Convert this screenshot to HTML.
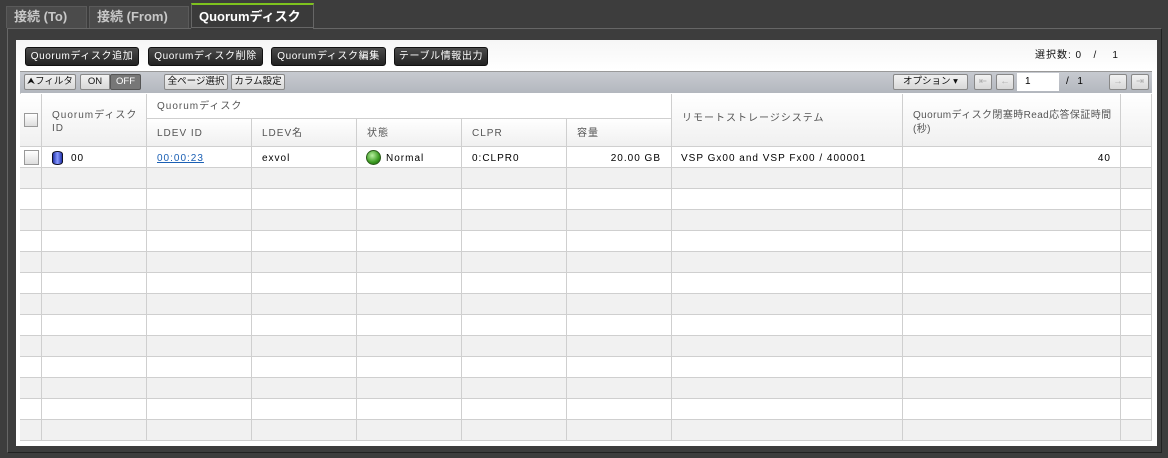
<!DOCTYPE html>
<html><head><meta charset="utf-8"><style>
*{box-sizing:border-box;margin:0;padding:0}
body{width:1168px;height:458px;background:#3d3d3d;font-family:"Liberation Sans","Noto Sans CJK JP",sans-serif;position:relative;overflow:hidden;line-height:12px}
.a{position:absolute}
.s{letter-spacing:1px}
.tab{position:absolute;top:6px;height:22px;background:#4b4b4b;border:1px solid #5a5a5a;border-bottom:none;color:#c8c8c8;font-weight:bold;font-size:13px;line-height:20px;padding-left:7px}
.btn{position:absolute;top:47px;height:19px;background:linear-gradient(#4a4a4a,#222);border:1px solid #111;border-radius:3px;color:#fff;font-size:10px;line-height:17px;text-align:center;letter-spacing:0.6px;white-space:nowrap}
.tb{position:absolute;top:74px;height:16px;background:linear-gradient(#f2f2f2,#d8d8d8);border:1px solid #888;border-radius:2px;font-size:9.5px;line-height:14px;text-align:center;color:#111;white-space:nowrap}
.cell{position:absolute;border-right:1px solid #cfcfcf;border-bottom:1px solid #cfcfcf;font-size:10px;color:#111;line-height:12px;letter-spacing:1px;white-space:nowrap}
.h{color:#555;background:linear-gradient(#fff,#f0f0f0)}
</style></head><body>
<div class="tab" style="left:6px;width:81px">接続 (To)</div>
<div class="tab" style="left:89px;width:100px">接続 (From)</div>
<div class="tab" style="left:191px;top:3px;height:25px;width:123px;background:#3a3a3a;border:1px solid #666;border-top:2px solid #7ec21e;color:#fff;line-height:23px">Quorumディスク</div>
<div class="a" style="left:7px;top:28px;width:1155px;height:425px;border:1px solid #666;border-right-color:#222;border-bottom-color:#222;background:#3d3d3d"></div>
<div class="a" style="left:191px;top:28px;width:122px;height:2px;background:#3a3a3a"></div>
<div class="a" style="left:16px;top:40px;width:1141px;height:406px;background:#fff;border-radius:3px 3px 0 0"></div>
<div class="a" style="left:16px;top:40px;width:1141px;height:30px;background:linear-gradient(#f6f6f6,#fff)"></div>
<div class="btn" style="left:25px;width:114px">Quorumディスク追加</div>
<div class="btn" style="left:148px;width:115px">Quorumディスク削除</div>
<div class="btn" style="left:271px;width:115px">Quorumディスク編集</div>
<div class="btn" style="left:394px;width:94px">テーブル情報出力</div>
<div class="a s" style="left:1035px;top:50px;font-size:10px;color:#111">選択数: 0 &nbsp;&nbsp;/ &nbsp;&nbsp;&nbsp;1</div>
<div class="a" style="left:20px;top:71px;width:1132px;height:22px;background:linear-gradient(#c7cad0,#b3b7be);border-top:1px solid #999"></div>
<div class="tb" style="left:24px;width:52px">⮝フィルタ</div>
<div class="tb" style="left:80px;width:30px;border-radius:2px 0 0 2px">ON</div>
<div class="tb" style="left:110px;width:31px;background:#777;color:#fff;border-color:#555">OFF</div>
<div class="tb" style="left:164px;width:64px">全ページ選択</div>
<div class="tb" style="left:231px;width:54px">カラム設定</div>
<div class="tb" style="left:893px;width:75px">オプション ▾</div>
<div class="tb" style="left:974px;width:18px;color:#aaa">⇤</div>
<div class="tb" style="left:996px;width:18px;color:#aaa">←</div>
<div class="a" style="left:1017px;top:73px;width:42px;height:18px;background:#fff;font-size:10px;line-height:18px;padding-left:8px">1</div>
<div class="a s" style="left:1066px;top:76px;font-size:10px">/ &nbsp;1</div>
<div class="tb" style="left:1109px;width:18px;color:#aaa">→</div>
<div class="tb" style="left:1131px;width:18px;color:#aaa">⇥</div>
<div class="a" style="left:20px;top:93px;width:1132px;height:348px;background:#fff;border-left:1px solid #cfcfcf;border-bottom:1px solid #cfcfcf"></div>
<div class="cell h" style="left:20px;top:94px;width:22px;height:53px"><div class="a" style="left:4px;top:19px;width:14px;height:14px;border:1px solid #999;background:linear-gradient(#fff,#ddd)"></div></div>
<div class="cell h" style="left:42px;top:94px;width:105px;height:53px;padding:15px 0 0 10px;line-height:13px">Quorumディスク<br>ID</div>
<div class="cell h" style="left:147px;top:94px;width:525px;height:25px;padding:7px 0 0 10px;background:#fff">Quorumディスク</div>
<div class="cell h" style="left:147px;top:119px;width:105px;height:28px;padding:9px 0 0 10px">LDEV ID</div>
<div class="cell h" style="left:252px;top:119px;width:105px;height:28px;padding:9px 0 0 10px">LDEV名</div>
<div class="cell h" style="left:357px;top:119px;width:105px;height:28px;padding:9px 0 0 10px">状態</div>
<div class="cell h" style="left:462px;top:119px;width:105px;height:28px;padding:9px 0 0 10px">CLPR</div>
<div class="cell h" style="left:567px;top:119px;width:105px;height:28px;padding:9px 0 0 10px">容量</div>
<div class="cell h" style="left:672px;top:94px;width:231px;height:53px;padding:19px 0 0 10px">リモートストレージシステム</div>
<div class="cell h" style="left:903px;top:94px;width:218px;height:53px;padding:15px 0 0 10px;line-height:14px;letter-spacing:0.4px">Quorumディスク閉塞時Read応答保証時間<br>(秒)</div>
<div class="cell h" style="left:1121px;top:94px;width:31px;height:53px"></div>
<div id="rows"></div>
<script>
var cols=[20,42,147,252,357,462,567,672,903,1121,1152],h='';
for(var r=0;r<14;r++){var y=147+r*21,bg=r%2?'#f1f1f1':'#fff';
for(var c=0;c<10;c++){h+='<div class="cell" style="left:'+cols[c]+'px;top:'+y+'px;width:'+(cols[c+1]-cols[c])+'px;height:21px;background:'+bg+'"></div>';}}
document.getElementById('rows').innerHTML=h;
</script>
<div class="a" style="left:24px;top:150px;width:15px;height:15px;border:1px solid #999;background:linear-gradient(#fff,#ddd)"></div>
<div class="a" style="left:52px;top:151px;width:11px;height:14px;border-radius:5px/3px;background:linear-gradient(90deg,#2233aa,#8899ff,#2233aa);border:1px solid #112"></div>
<div class="a s" style="left:71px;top:153px;font-size:10px">00</div>
<div class="a s" style="left:157px;top:153px;font-size:10px;color:#1a5fb4;text-decoration:underline">00:00:23</div>
<div class="a s" style="left:262px;top:153px;font-size:10px">exvol</div>
<div class="a" style="left:366px;top:150px;width:15px;height:15px;border-radius:50%;background:radial-gradient(circle at 40% 35%,#b8f0a0,#3a9a20 60%,#1c5a10);border:1px solid #2a5a1a"></div>
<div class="a s" style="left:386px;top:153px;font-size:10px">Normal</div>
<div class="a s" style="left:472px;top:153px;font-size:10px">0:CLPR0</div>
<div class="a s" style="left:567px;top:153px;width:94px;text-align:right;font-size:10px">20.00 GB</div>
<div class="a s" style="left:681px;top:153px;font-size:10px">VSP Gx00 and VSP Fx00 / 400001</div>
<div class="a s" style="left:903px;top:153px;width:208px;text-align:right;font-size:10px">40</div>
</body></html>
